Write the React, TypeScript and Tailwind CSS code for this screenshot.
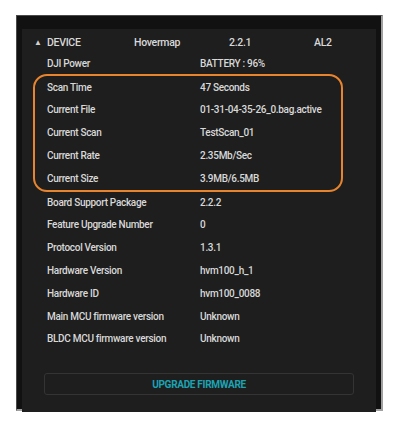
import React from 'react';

const rows: [string, string][] = [
  ['Board Support Package', '2.2.2'],
  ['Feature Upgrade Number', '0'],
  ['Protocol Version', '1.3.1'],
  ['Hardware Version', 'hvm100_h_1'],
  ['Hardware ID', 'hvm100_0088'],
  ['Main MCU firmware version', 'Unknown'],
  ['BLDC MCU firmware version', 'Unknown'],
];

const scanRows: [string, string][] = [
  ['Scan Time', '47 Seconds'],
  ['Current File', '01-31-04-35-26_0.bag.active'],
  ['Current Scan', 'TestScan_01'],
  ['Current Rate', '2.35Mb/Sec'],
  ['Current Size', '3.9MB/6.5MB'],
];

const Row = ({ label, value }: { label: string; value: string }) => (
  <div className="flex h-[22.8px] items-center">
    <span className="w-[153px] shrink-0">{label}</span>
    <span>{value}</span>
  </div>
);

const App: React.FC = () => {
  return (
    <div className="w-[400px] h-[428px] bg-white pt-[15px] pl-[16px]" style={{ fontFamily: 'Roboto, "Liberation Sans", sans-serif' }}>
      <div className="w-[367px] h-[396px] border-t border-l border-[#4a4a4a] border-r-2 border-b-2 border-r-[#a0a0a0] border-b-[#a0a0a0] bg-[#111111] p-[5px]">
        <div className="h-full bg-[#1e1e1e] text-[10px] font-medium text-[#d8d8d8] tracking-[-0.3px]">
          <div className="flex h-[23px] items-center pt-[4px] mt-[8px] pl-[12px]">
            <span className="w-[13px] text-[8px] text-[#cfcfcf]">▲</span>
            <span className="w-[87px] text-[10.5px]">DEVICE</span>
            <span className="w-[95px] text-[10.5px]">Hovermap</span>
            <span className="w-[85px] text-[10.5px]">2.2.1</span>
            <span className="text-[10.5px]">AL2</span>
          </div>
          <div className="pl-[25px]">
            <Row label="DJI Power" value="BATTERY : 96%" />
          </div>
          <div className="ml-[11px] w-[310px] border-2 border-[#e8842e] rounded-[14px] -my-[1px] pl-[12px]">
            {scanRows.map(([l, v]) => (
              <Row key={l} label={l} value={v} />
            ))}
          </div>
          <div className="pl-[25px]">
            {rows.map(([l, v]) => (
              <Row key={l} label={l} value={v} />
            ))}
          </div>
          <div className="mt-[23px] ml-[22px] w-[310px] h-[22px] border border-[#343434] rounded-[3px] flex items-center justify-center text-[10px] font-bold text-[#1ca3b3]">
            UPGRADE FIRMWARE
          </div>
        </div>
      </div>
    </div>
  );
};

export default App;
